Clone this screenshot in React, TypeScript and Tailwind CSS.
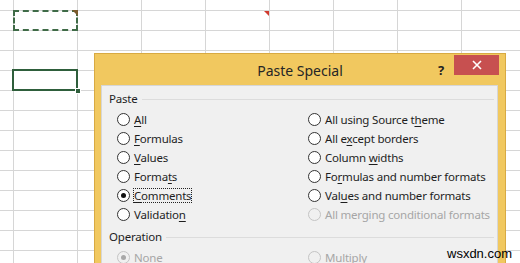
import React from 'react'

type Opt = { pre: string; key: string; post: string; disabled?: boolean; checked?: boolean; focus?: boolean }

const left: Opt[] = [
  { pre: '', key: 'A', post: 'll' },
  { pre: '', key: 'F', post: 'ormulas' },
  { pre: '', key: 'V', post: 'alues' },
  { pre: 'Forma', key: 't', post: 's' },
  { pre: '', key: 'C', post: 'omments', checked: true, focus: true },
  { pre: 'Validatio', key: 'n', post: '' },
]

const right: Opt[] = [
  { pre: 'All using Source t', key: 'h', post: 'eme' },
  { pre: 'All e', key: 'x', post: 'cept borders' },
  { pre: 'Column ', key: 'w', post: 'idths' },
  { pre: 'Fo', key: 'r', post: 'mulas and number formats' },
  { pre: 'Val', key: 'u', post: 'es and number formats' },
  { pre: 'All merging conditional formats', key: '', post: '', disabled: true },
]

const Radio = ({ checked, disabled }: { checked?: boolean; disabled?: boolean }) => (
  <span
    className={
      'w-[13px] h-[13px] rounded-full border flex items-center justify-center shrink-0 ' +
      (disabled ? 'border-[#c4c4c4] bg-[#f0f0f0]' : 'border-[#333] bg-white')
    }
  >
    {checked && <span className={'w-[5px] h-[5px] rounded-full ' + (disabled ? 'bg-[#a8a8a8]' : 'bg-[#111]')} />}
  </span>
)

const Row = ({ o }: { o: Opt }) => (
  <div className="h-[19px] flex items-center gap-[4px] whitespace-nowrap">
    <Radio checked={o.checked} disabled={o.disabled} />
    <span
      className={
        'leading-[13px] ' +
        (o.disabled ? 'text-[#a6a6a6] ' : 'text-[#1e1e1e] ') +
        (o.focus ? 'outline outline-1 outline-dotted outline-[#222] outline-offset-0' : '')
      }
    >
      {o.pre}
      {o.key && <u className="underline-offset-2">{o.key}</u>}
      {o.post}
    </span>
  </div>
)

const Group = ({ title }: { title: string }) => (
  <div className="h-[16px] flex items-center gap-[4px] pl-[7px] pr-[3px]">
    <span className="text-[#1e1e1e]">{title}</span>
    <div className="flex-1 border-t border-[#dcdcdc] mt-[1px]" />
  </div>
)

export default function App() {
  return (
    <div
      className="relative w-[520px] h-[263px] overflow-hidden bg-white bg-[linear-gradient(to_right,#d6d6d6_1px,transparent_1px),linear-gradient(to_bottom,#d6d6d6_1px,transparent_1px)] bg-[size:64px_20px] bg-[position:13px_10px]"
      style={{ fontFamily: '"Noto Sans", "Open Sans", sans-serif' }}
    >
      {/* copied range */}
      <div className="absolute left-[13px] top-[10px] w-[65px] h-[21px] border-2 border-dashed border-[#3f6b47]" />
      <div className="absolute left-[72px] top-[10px] w-0 h-0 border-l-[6px] border-l-transparent border-t-[6px] border-t-[#7b5a2c]" />
      <div className="absolute left-[264px] top-[11px] w-0 h-0 border-l-[5px] border-l-transparent border-t-[5px] border-t-[#d03a2f]" />
      {/* active cell */}
      <div className="absolute left-[12px] top-[69px] w-[66px] h-[22px] border-2 border-[#2e5e3b]" />
      <div className="absolute left-[75px] top-[88px] w-[6px] h-[6px] bg-[#2e5e3b] border border-white" />

      {/* dialog */}
      <div className="absolute left-[94px] top-[53px] w-[412px] h-[230px] bg-[#f1c85f] border border-[#d8aa43] flex flex-col">
        <div className="h-[31px] relative flex items-center justify-center shrink-0">
          <span className="text-[14px] text-[#262626] mt-[2px]">Paste Special</span>
          <span className="absolute left-[343px] top-[7px] text-[13px] font-bold text-[#222]">?</span>
          <div className="absolute left-[359px] top-[1px] w-[45px] h-[20px] bg-[#c75050] flex items-center justify-center">
            <svg width="10" height="10" viewBox="0 0 10 10">
              <path d="M1 1L9 9M9 1L1 9" stroke="white" strokeWidth="1.6" />
            </svg>
          </div>
        </div>
        <div className="ml-[6px] mr-[7px] flex-1 bg-[#f0f0f0] border border-[#d6d6d6] pt-[5px] text-[11.5px] tracking-[-0.2px]">
          <Group title="Paste" />
          <div className="grid grid-cols-[191px_1fr] pl-[15px] mt-[3px]">
            <div className="flex flex-col">
              {left.map((o, i) => (
                <Row key={i} o={o} />
              ))}
            </div>
            <div className="flex flex-col">
              {right.map((o, i) => (
                <Row key={i} o={o} />
              ))}
            </div>
          </div>
          <div className="mt-[5px]">
            <Group title="Operation" />
          </div>
          <div className="grid grid-cols-[191px_1fr] pl-[15px] mt-[3px]">
            <Row o={{ pre: 'None', key: '', post: '', disabled: true, checked: true }} />
            <Row o={{ pre: 'Multiply', key: '', post: '', disabled: true }} />
          </div>
        </div>
      </div>

      <span
        className="absolute left-[447px] top-[244px] text-[13px] text-black"
        style={{ fontFamily: '"Liberation Sans", Arial, sans-serif' }}
      >
        wsxdn.com
      </span>
    </div>
  )
}
